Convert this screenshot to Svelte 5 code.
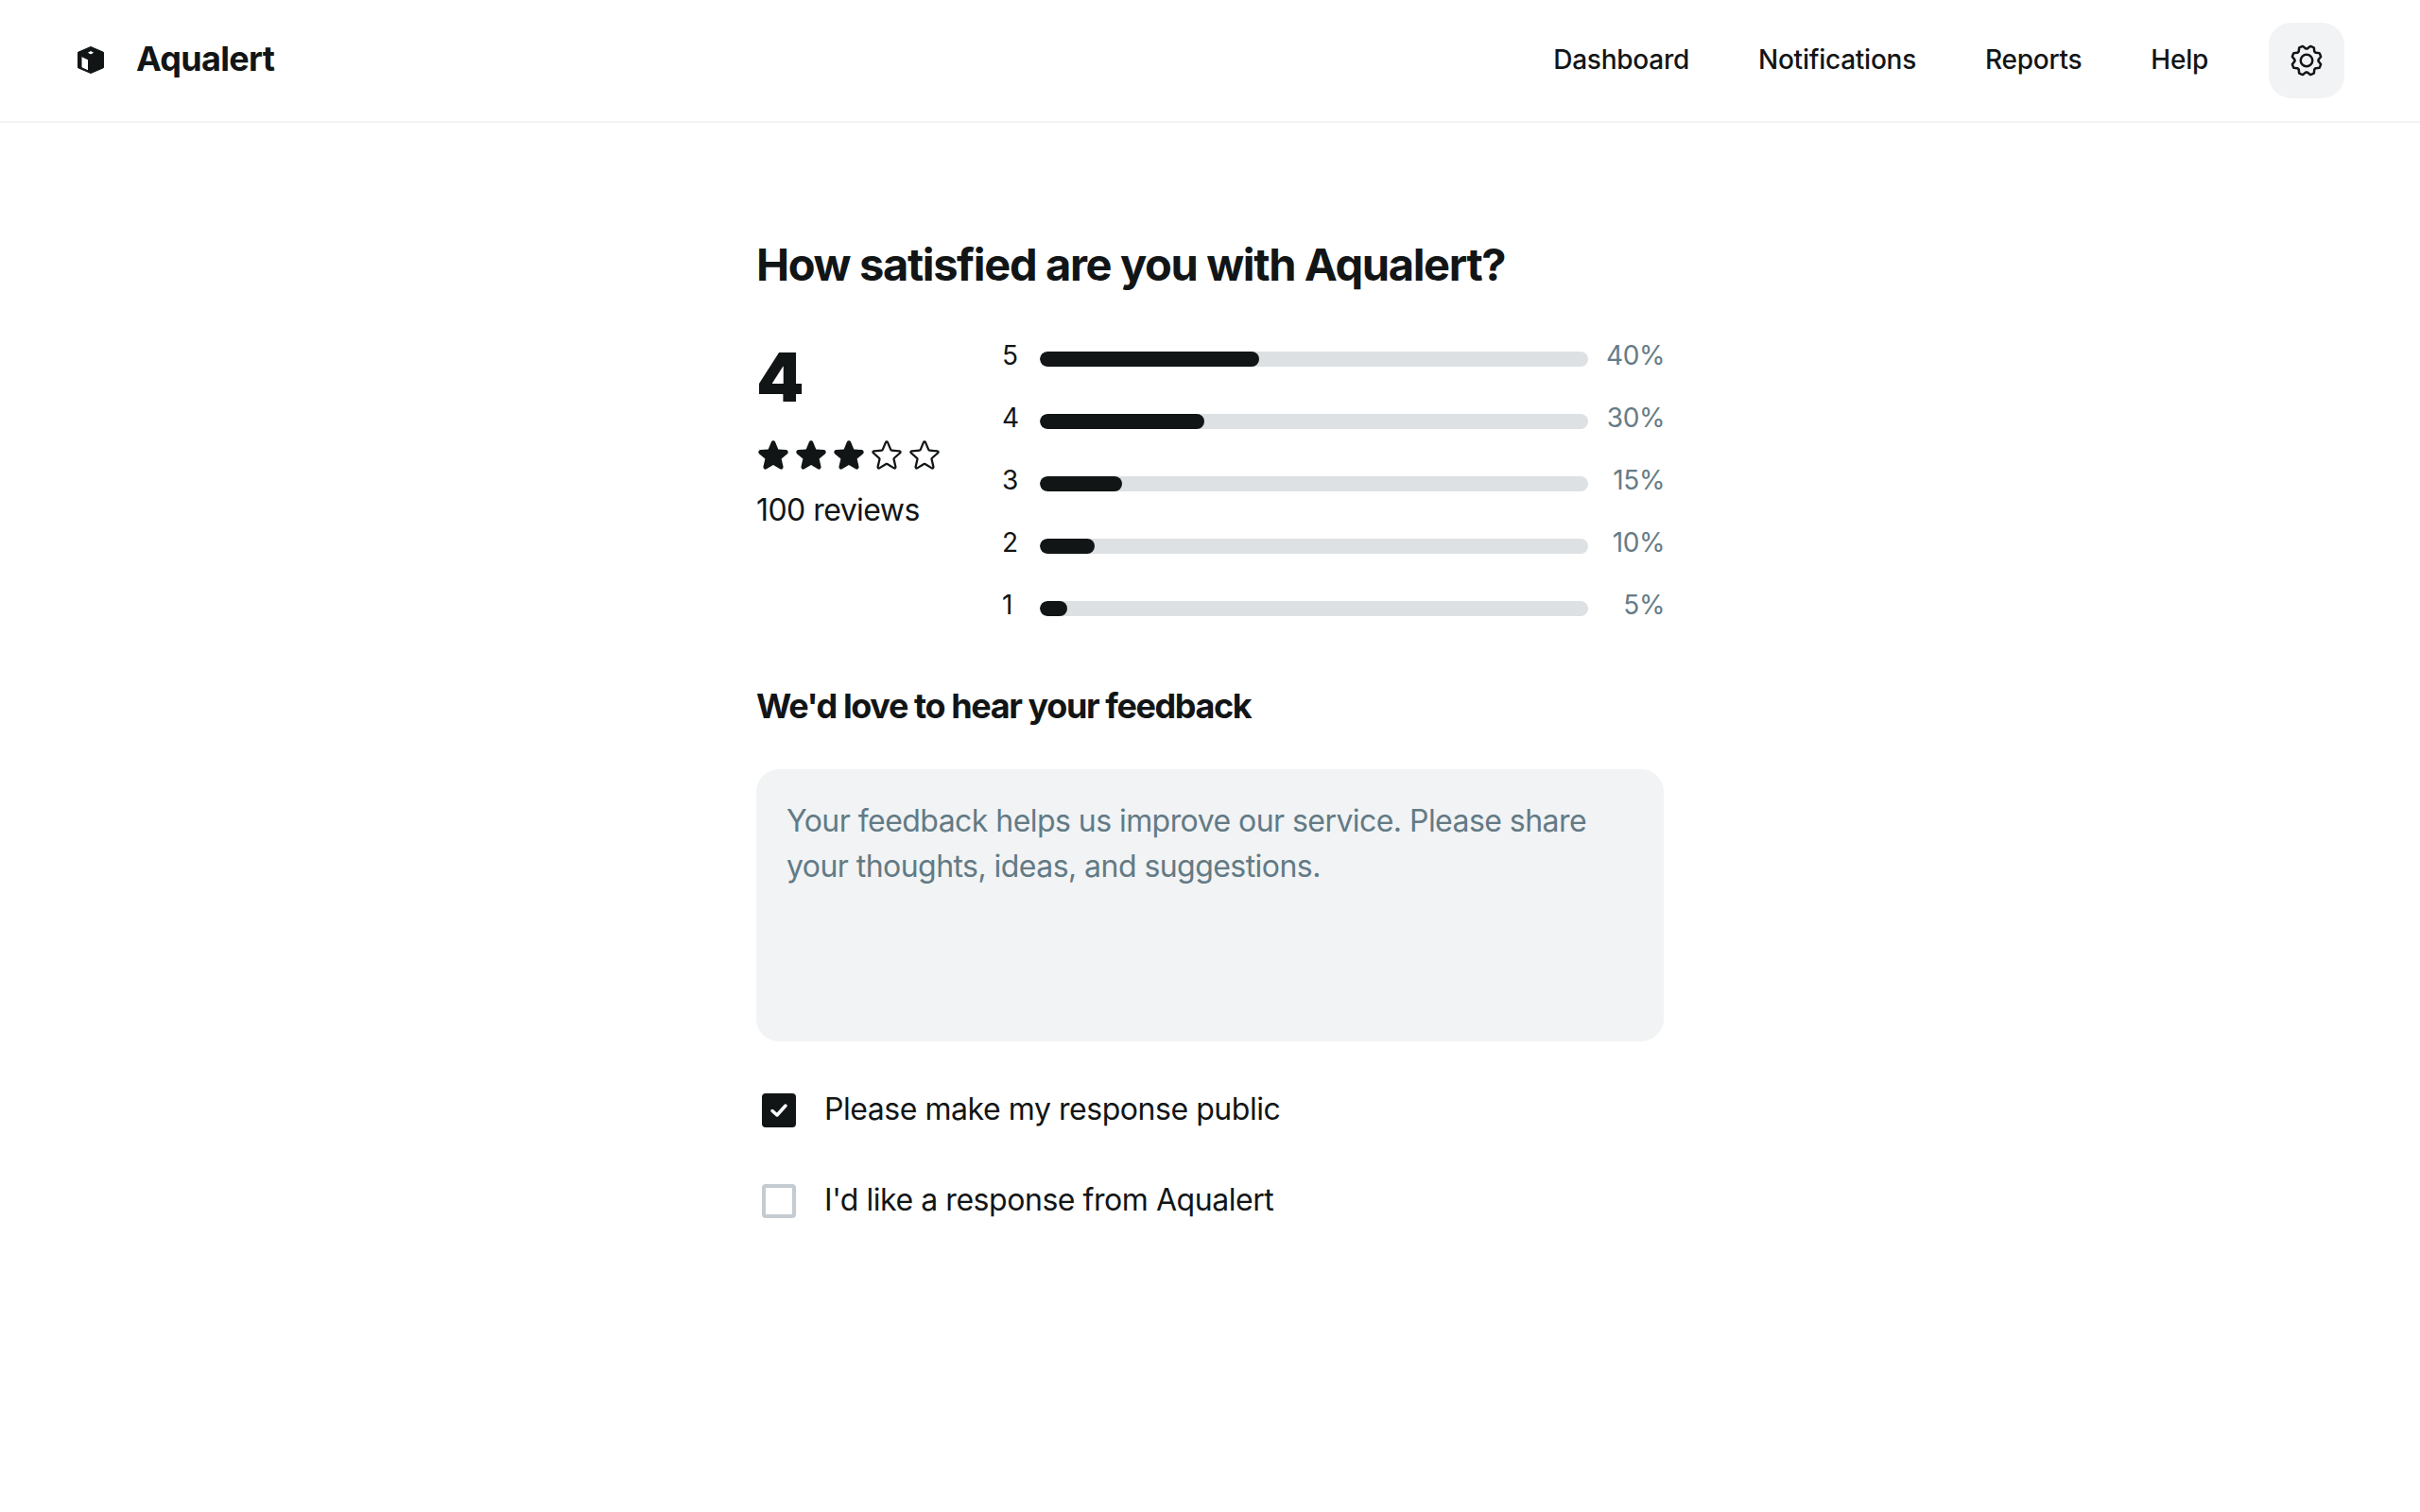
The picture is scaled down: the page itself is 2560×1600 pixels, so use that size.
<script>
  const nav = ['Dashboard', 'Notifications', 'Reports', 'Help'];
  const bars = [
    { label: 5, pct: 40 },
    { label: 4, pct: 30 },
    { label: 3, pct: 15 },
    { label: 2, pct: 10 },
    { label: 1, pct: 5 }
  ];
  const stars = [true, true, true, false, false];
  const starFill = 'M234.29,114.85l-45,38.83L203,211.75a16.4,16.4,0,0,1-24.5,17.82L128,198.49,77.47,229.57A16.4,16.4,0,0,1,53,211.75l13.76-58.07-45-38.83A16.46,16.46,0,0,1,31.08,86l59-4.76,22.76-55.08a16.36,16.36,0,0,1,30.27,0l22.75,55.08,59,4.76a16.46,16.46,0,0,1,9.37,28.86Z';
  const starLine = 'M239.2,97.29a16,16,0,0,0-13.81-11L166,81.17,142.72,25.81h0a15.95,15.95,0,0,0-29.44,0L90.07,81.17,30.61,86.32a16,16,0,0,0-9.11,28.06L66.61,153.8,53.09,212.34a16,16,0,0,0,23.84,17.34l51-31,51.11,31a16,16,0,0,0,23.84-17.34l-13.51-58.6,45.1-39.36A16,16,0,0,0,239.2,97.29Zm-15.22,5-45.1,39.36a16,16,0,0,0-5.08,15.71L187.35,216v0l-51.07-31a15.9,15.9,0,0,0-16.54,0l-51,31h0L82.2,157.4a16,16,0,0,0-5.08-15.71L32,102.35a.37.37,0,0,1,0-.09l59.44-5.14a16,16,0,0,0,13.35-9.75L128,32.08l23.2,55.29a16,16,0,0,0,13.35,9.75L224,102.26S224,102.32,224,102.33Z';
  const gear = 'M128,80a48,48,0,1,0,48,48A48.05,48.05,0,0,0,128,80Zm0,80a32,32,0,1,1,32-32A32,32,0,0,1,128,160Zm88-29.84q.06-2.16,0-4.32l14.92-18.64a8,8,0,0,0,1.48-7.06,107.21,107.21,0,0,0-10.88-26.25,8,8,0,0,0-6-3.93l-23.72-2.64q-1.48-1.56-3-3L186,40.54a8,8,0,0,0-3.94-6,107.71,107.71,0,0,0-26.25-10.87,8,8,0,0,0-7.06,1.49L130.16,40Q128,40,125.84,40L107.2,25.11a8,8,0,0,0-7.06-1.48A107.6,107.6,0,0,0,73.89,34.51a8,8,0,0,0-3.93,6L67.32,64.27q-1.56,1.49-3,3L40.54,70a8,8,0,0,0-6,3.94,107.71,107.71,0,0,0-10.87,26.25,8,8,0,0,0,1.49,7.06L40,125.84Q40,128,40,130.16L25.11,148.8a8,8,0,0,0-1.48,7.06,107.21,107.21,0,0,0,10.88,26.25,8,8,0,0,0,6,3.93l23.72,2.64q1.49,1.56,3,3L70,215.46a8,8,0,0,0,3.94,6,107.71,107.71,0,0,0,26.25,10.87,8,8,0,0,0,7.06-1.49L125.84,216q2.16.06,4.32,0l18.64,14.92a8,8,0,0,0,7.06,1.48,107.21,107.21,0,0,0,26.25-10.88,8,8,0,0,0,3.93-6l2.64-23.72q1.56-1.48,3-3L215.46,186a8,8,0,0,0,6-3.94,107.71,107.71,0,0,0,10.87-26.25,8,8,0,0,0-1.49-7.06Zm-16.1-6.5a73.93,73.93,0,0,1,0,8.68,8,8,0,0,0,1.74,5.48l14.19,17.73a91.57,91.57,0,0,1-6.23,15L187,173.11a8,8,0,0,0-5.1,2.64,74.11,74.11,0,0,1-6.14,6.14,8,8,0,0,0-2.64,5.1l-2.51,22.58a91.32,91.32,0,0,1-15,6.23l-17.74-14.19a8,8,0,0,0-5-1.75h-.48a73.93,73.93,0,0,1-8.68,0,8,8,0,0,0-5.48,1.74L100.45,215.8a91.57,91.57,0,0,1-15-6.23L82.89,187a8,8,0,0,0-2.64-5.1,74.11,74.11,0,0,1-6.14-6.14,8,8,0,0,0-5.1-2.64L46.43,170.6a91.32,91.32,0,0,1-6.23-15l14.19-17.74a8,8,0,0,0,1.74-5.48,73.93,73.93,0,0,1,0-8.68,8,8,0,0,0-1.74-5.48L40.2,100.45a91.57,91.57,0,0,1,6.23-15L69,82.89a8,8,0,0,0,5.1-2.64,74.11,74.11,0,0,1,6.14-6.14A8,8,0,0,0,82.89,69L85.4,46.43a91.32,91.32,0,0,1,15-6.23l17.74,14.19a8,8,0,0,0,5.48,1.74,73.93,73.93,0,0,1,8.68,0,8,8,0,0,0,5.48-1.74L155.55,40.2a91.57,91.57,0,0,1,15,6.23L173.11,69a8,8,0,0,0,2.64,5.1,74.11,74.11,0,0,1,6.14,6.14,8,8,0,0,0,5.1,2.64l22.58,2.51a91.32,91.32,0,0,1,6.23,15l-14.19,17.74A8,8,0,0,0,199.87,123.66Z';
</script>

<header class="topbar">
  <div class="brand">
    <svg class="logo" viewBox="4 3 32 32" aria-hidden="true">
      <path fill="#121516" fill-rule="evenodd" stroke="#121516" stroke-width="1" stroke-linejoin="round" d="M20 4.500 33.500 10.300V26.700L20 32.500 6.500 26.700V10.300ZM20 8.500 16 10.800 20 13 24 10.800ZM10 14.500V26.500L17.500 30V18Z"/>
    </svg>
    <span class="brand-name">Aqualert</span>
  </div>
  <div class="actions">
    <nav class="nav">
      {#each nav as item}
        <span class="nav-item">{item}</span>
      {/each}
    </nav>
    <button class="settings" aria-label="Settings">
      <svg viewBox="0 0 256 256" width="40" height="40" fill="#121516"><path d={gear}/></svg>
    </button>
  </div>
</header>

<main class="content">
  <h1>How satisfied are you with Aqualert?</h1>

  <section class="rating">
    <div class="summary">
      <div class="score">4</div>
      <div class="stars">
        {#each stars as filled}
          <svg viewBox="0 0 256 256" width="36" height="36" fill="#121516" aria-hidden="true">
            <path d={filled ? starFill : starLine}/>
          </svg>
        {/each}
      </div>
      <div class="reviews">100 reviews</div>
    </div>
    <div class="bars">
      {#each bars as bar}
        <div class="bar-row">
          <span class="bar-label">{bar.label}</span>
          <div class="track"><div class="fill" style="width: {bar.pct}%"></div></div>
          <span class="bar-pct">{bar.pct}%</span>
        </div>
      {/each}
    </div>
  </section>

  <h2>We'd love to hear your feedback</h2>

  <div class="feedback">Your feedback helps us improve our service. Please share your thoughts, ideas, and suggestions.</div>

  <div class="checks">
    <div class="check-row">
      <span class="box checked">
        <svg viewBox="0 0 36 36" width="36" height="36" fill="none" stroke="#fff" stroke-width="3.500" stroke-linecap="round" stroke-linejoin="round"><path d="M11 18.500l5 4.500 9-10"/></svg>
      </span>
      <span class="check-text">Please make my response public</span>
    </div>
    <div class="check-row">
      <span class="box"></span>
      <span class="check-text">I'd like a response from Aqualert</span>
    </div>
  </div>
</main>

<style>
  :global(body) {
    background: #fff;
    color: #121516;
    font-family: Inter, "Noto Sans", sans-serif;
  }

  .topbar {
    display: flex;
    align-items: center;
    justify-content: space-between;
    height: 128px;
    padding: 0 80px;
    border-bottom: 2px solid #f1f3f4;
  }

  .brand {
    display: flex;
    align-items: center;
    gap: 32px;
  }

  .logo {
    width: 32px;
    height: 32px;
  }

  .brand-name {
    padding-bottom: 4px;
    font-size: 36px;
    font-weight: 700;
    letter-spacing: -0.7px;
  }

  .actions {
    display: flex;
    align-items: center;
    gap: 64px;
  }

  .nav {
    display: flex;
    gap: 73px;
  }

  .nav-item {
    padding-bottom: 3px;
    font-size: 28px;
    font-weight: 500;
    letter-spacing: -0.25px;
  }

  .settings {
    display: flex;
    align-items: center;
    justify-content: center;
    width: 80px;
    height: 80px;
    padding: 0;
    border: 0;
    border-radius: 24px;
    background: #f1f3f4;
  }

  .content {
    width: 960px;
    margin: 0 auto;
    padding-top: 120px;
  }

  h1 {
    margin: 0;
    font-size: 47px;
    line-height: 60px;
    font-weight: 700;
    letter-spacing: -1.35px;
  }

  .rating {
    display: flex;
    gap: 64px;
    margin-top: 44px;
  }

  .summary {
    width: 196px;
    flex-shrink: 0;
  }

  .score {
    font-size: 72px;
    line-height: 90px;
    font-weight: 900;
  }

  .stars {
    display: flex;
    gap: 4px;
    margin-top: 20px;
  }

  .stars svg {
    display: block;
  }

  .reviews {
    margin-top: 16px;
    font-size: 32px;
    line-height: 48px;
    letter-spacing: -0.55px;
  }

  .bars {
    flex: 1;
    display: flex;
    flex-direction: column;
    gap: 24px;
    padding-top: 5px;
  }

  .bar-row {
    display: grid;
    grid-template-columns: 40px 580px 1fr;
    align-items: center;
    height: 42px;
  }

  .bar-label {
    padding-bottom: 8px;
    font-size: 28px;
  }

  .track {
    height: 16px;
    border-radius: 8px;
    background: #dde1e4;
    overflow: hidden;
  }

  .fill {
    height: 100%;
    border-radius: 8px;
    background: #121516;
  }

  .bar-pct {
    margin-right: -1px;
    padding-bottom: 8px;
    text-align: right;
    font-size: 28px;
    letter-spacing: -0.4px;
    color: #667c86;
  }

  h2 {
    margin: 59px 0 0;
    font-size: 36px;
    line-height: 46px;
    font-weight: 700;
    letter-spacing: -1.4px;
  }

  .feedback {
    box-sizing: border-box;
    height: 288px;
    margin-top: 44px;
    padding: 31px 32px;
    border-radius: 24px;
    background: #f1f3f4;
    color: #637a85;
    font-size: 32px;
    line-height: 48px;
    letter-spacing: -0.55px;
  }

  .checks {
    display: flex;
    flex-direction: column;
    gap: 46px;
    margin-top: 48px;
    padding-left: 6px;
    font-size: 32px;
    line-height: 48px;
    letter-spacing: -0.45px;
  }

  .check-row {
    display: flex;
    align-items: center;
    gap: 30px;
  }

  .check-text {
    padding-bottom: 2px;
  }

  .box {
    box-sizing: border-box;
    width: 36px;
    height: 36px;
    border: 4px solid #c4cbd1;
    border-radius: 4px;
  }

  .box.checked {
    border: 0;
    background: #121516;
  }

  .box svg {
    display: block;
  }
</style>
